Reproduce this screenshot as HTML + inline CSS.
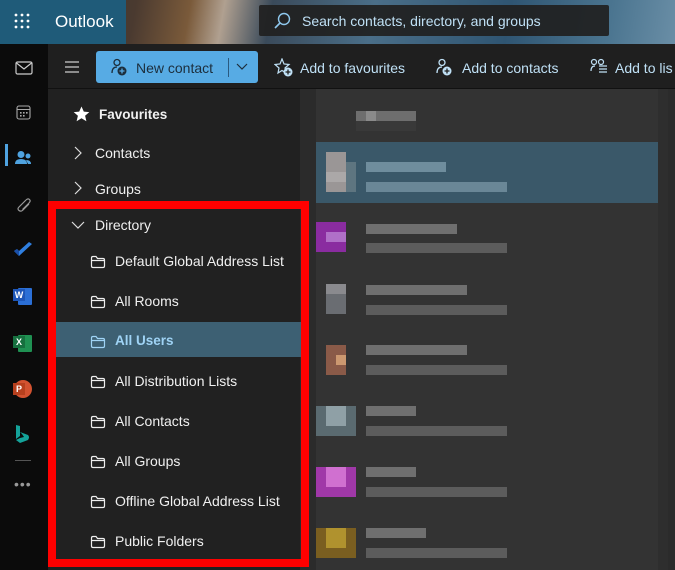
<!DOCTYPE html>
<html><head><style>
*{margin:0;padding:0;box-sizing:border-box}
body{width:675px;height:570px;overflow:hidden;background:#1f1f1f;font-family:"Liberation Sans",sans-serif;position:relative;color:#fff}
.abs{position:absolute}
.hdr{left:0;top:0;width:675px;height:44px;background:linear-gradient(100deg,#2a3036 0%,#4a3a30 20%,#7a5a3a 28%,#b0a090 33%,#3a4a5a 40%,#4a6e88 55%,#2f5572 75%,#4b7590 90%,#6a8ea6 100%)}
.hdrl{left:0;top:0;width:126px;height:44px;background:#1f5b79}
.search{left:259px;top:5px;width:350px;height:31px;background:rgba(32,32,32,.93);border-radius:2px}
.tb{left:48px;top:44px;width:627px;height:45px;background:#1f1f1f;border-bottom:1px solid #111}
.rail{left:0;top:44px;width:48px;height:526px;background:#0b0b0b}
.nav{left:48px;top:89px;width:253px;height:481px;background:#212121}
.list{left:300px;top:89px;width:375px;height:481px;background:#2b2b2b}
.list2{left:316px;top:89px;width:342px;height:481px;background:#333}
.t{font-size:14px;color:#f0f0f0;white-space:nowrap}
</style></head><body>
<div class="abs hdr"></div>
<div class="abs hdrl"></div>
<svg class="abs" style="left:14px;top:13px" width="18" height="18"><g fill="#fff"><circle cx="2" cy="2" r="1.4"/><circle cx="8" cy="2" r="1.4"/><circle cx="14" cy="2" r="1.4"/><circle cx="2" cy="8" r="1.4"/><circle cx="8" cy="8" r="1.4"/><circle cx="14" cy="8" r="1.4"/><circle cx="2" cy="14" r="1.4"/><circle cx="8" cy="14" r="1.4"/><circle cx="14" cy="14" r="1.4"/></g></svg>
<div class="abs" style="left:55px;top:12px;font-size:17px;color:#fff">Outlook</div>
<div class="abs search"></div>
<svg class="abs" style="left:273px;top:12px" width="18" height="18"><circle cx="11" cy="7" r="5.5" fill="none" stroke="#8fc8ee" stroke-width="1.4"/><path d="M7 11 L2 16" stroke="#8fc8ee" stroke-width="1.6"/></svg>
<div class="abs t" style="left:302px;top:13px;color:#bfe0f5;font-size:14px">Search contacts, directory, and groups</div>

<div class="abs rail"></div>
<div class="abs tb"></div>
<div class="abs nav"></div>
<div class="abs list"></div>
<div class="abs list2"></div>
<div class="abs" style="left:658px;top:89px;width:10px;height:481px;background:#2e2e2e"></div>

<svg class="abs" style="left:15px;top:61px" width="18" height="14"><rect x="1" y="1" width="16" height="12" rx="1.5" fill="none" stroke="#ccc" stroke-width="1.2"/><path d="M1.5 2 L9 8 L16.5 2" fill="none" stroke="#ccc" stroke-width="1.2"/></svg>
<svg class="abs" style="left:16px;top:105px" width="16" height="16"><rect x="1" y="1" width="13" height="13" rx="2" fill="none" stroke="#aaa" stroke-width="1.1"/><path d="M1 4.5H14" stroke="#aaa"/><g fill="#aaa"><rect x="4" y="7" width="1.6" height="1.6"/><rect x="7" y="7" width="1.6" height="1.6"/><rect x="10" y="7" width="1.6" height="1.6"/><rect x="4" y="10" width="1.6" height="1.6"/><rect x="7" y="10" width="1.6" height="1.6"/></g></svg>
<div class="abs" style="left:5px;top:144px;width:3px;height:22px;background:#4fa3e0"></div>
<svg class="abs" style="left:14px;top:150px" width="18" height="16"><circle cx="7" cy="4.5" r="3.5" fill="#4fa3e0"/><circle cx="14" cy="6" r="2.5" fill="#4fa3e0"/><path d="M1 14 Q1 9 7 9 Q13 9 13 14 Z" fill="#4fa3e0"/><path d="M12 10 Q17 10 17 14 L14 14Z" fill="#4fa3e0"/></svg>
<svg class="abs" style="left:15px;top:197px" width="16" height="16"><path d="M11 3 L4 10 Q2 12 4 13.5 Q6 15 8 13 L14 7" fill="none" stroke="#999" stroke-width="1.2"/><path d="M11 3 Q13 1 14.5 2.5 Q16 4 14 6 L7.5 12.5" fill="none" stroke="#999" stroke-width="1.2"/></svg>
<svg class="abs" style="left:13px;top:242px" width="20" height="16"><path d="M1 9 L6 14 L19 2 L16 0 L6 9 L4 7Z" fill="#2f7fe0"/><path d="M1 9 L4 7 L6 9 L6 14Z" fill="#1a4fa8"/></svg>
<div class="abs" style="left:18px;top:288px;width:14px;height:17px;background:#2b6fd6;border-radius:1px"></div>
<div class="abs" style="left:13px;top:289px;width:12px;height:12px;background:#1d56b8;font-size:9px;font-weight:bold;text-align:center;line-height:12px">W</div>
<div class="abs" style="left:18px;top:335px;width:14px;height:17px;background:#1f9152;border-radius:1px"></div>
<div class="abs" style="left:13px;top:336px;width:12px;height:12px;background:#16703f;font-size:9px;font-weight:bold;text-align:center;line-height:12px">X</div>
<div class="abs" style="left:14px;top:380px;width:18px;height:18px;background:#d35230;border-radius:50%"></div>
<div class="abs" style="left:13px;top:383px;width:12px;height:12px;background:#b7401e;font-size:9px;font-weight:bold;text-align:center;line-height:12px">P</div>
<svg class="abs" style="left:15px;top:424px" width="16" height="20"><path d="M1 1 L5 2 L5 12 L1 15Z" fill="#14a39a"/><path d="M5 8 L13 11 Q15 13 13 16 L5 19 L1 16 L5 14 L9 13 L7 10Z" fill="#14a39a"/></svg>
<div class="abs" style="left:15px;top:460px;width:16px;height:1px;background:#555"></div>
<div class="abs" style="left:14px;top:476px;font-size:14px;color:#999;letter-spacing:1px">•••</div>

<svg class="abs" style="left:64px;top:61px" width="16" height="12"><path d="M1 1H15M1 6H15M1 11H15" stroke="#ccc" stroke-width="1.2"/></svg>
<div class="abs" style="left:96px;top:51px;width:162px;height:32px;background:#57abe4;border-radius:3px"></div>
<div class="abs" style="left:228px;top:58px;width:1px;height:19px;background:#2a5a80"></div>
<svg class="abs" style="left:110px;top:58px" width="18" height="18"><circle cx="7" cy="4.5" r="3" fill="none" stroke="#1c2e3c" stroke-width="1.3"/><path d="M2 15 Q2 9 7 9" fill="none" stroke="#1c2e3c" stroke-width="1.3"/><circle cx="12" cy="13" r="4.5" fill="#1c2e3c"/><path d="M12 10.5V15.5M9.5 13H14.5" stroke="#57abe4" stroke-width="1.3"/></svg>
<div class="abs t" style="left:136px;top:60px;color:#1c2e3c;font-size:14px">New contact</div>
<svg class="abs" style="left:236px;top:63px" width="12" height="8"><path d="M1 1 L6 6 L11 1" fill="none" stroke="#1c2e3c" stroke-width="1.2"/></svg>
<svg class="abs" style="left:274px;top:58px" width="20" height="20"><path d="M8 1 L10 6 L15 6.5 L11 10 L12 15 L8 12.5 L4 15 L5 10 L1 6.5 L6 6Z" fill="none" stroke="#bfe0f5" stroke-width="1.2"/><circle cx="14" cy="14" r="4.5" fill="#bfe0f5"/><path d="M14 11.5V16.5M11.5 14H16.5" stroke="#1f1f1f" stroke-width="1.3"/></svg>
<div class="abs t" style="left:300px;top:60px;color:#bfe0f5">Add to favourites</div>
<svg class="abs" style="left:435px;top:58px" width="20" height="20"><circle cx="7" cy="4.5" r="3" fill="none" stroke="#bfe0f5" stroke-width="1.3"/><path d="M2 15 Q2 9 7 9" fill="none" stroke="#bfe0f5" stroke-width="1.3"/><circle cx="12" cy="13" r="4.5" fill="#bfe0f5"/><path d="M12 10.5V15.5M9.5 13H14.5" stroke="#1f1f1f" stroke-width="1.3"/></svg>
<div class="abs t" style="left:462px;top:60px;color:#bfe0f5">Add to contacts</div>
<svg class="abs" style="left:590px;top:58px" width="20" height="18"><circle cx="4" cy="4" r="2.5" fill="none" stroke="#bfe0f5" stroke-width="1.2"/><circle cx="11" cy="4" r="2.5" fill="none" stroke="#bfe0f5" stroke-width="1.2"/><path d="M1 13 Q1 8 5 8M9 11H17M9 14H17M9 8H17" fill="none" stroke="#bfe0f5" stroke-width="1.2"/></svg>
<div class="abs t" style="left:615px;top:60px;color:#bfe0f5">Add to lis</div>

<svg class="abs" style="left:73px;top:106px" width="17" height="16"><path d="M8.5 0.5 L10.8 5.6 L16.3 6.1 L12.1 9.8 L13.4 15.2 L8.5 12.3 L3.6 15.2 L4.9 9.8 L0.7 6.1 L6.2 5.6Z" fill="#fff"/></svg>
<div class="abs t" style="left:99px;top:107px;font-weight:bold;font-size:13.5px">Favourites</div>
<svg class="abs" style="left:74px;top:146px" width="8" height="14"><path d="M1 1 L7 7 L1 13" fill="none" stroke="#ddd" stroke-width="1.2"/></svg>
<div class="abs t" style="left:95px;top:145px">Contacts</div>
<svg class="abs" style="left:74px;top:181px" width="8" height="14"><path d="M1 1 L7 7 L1 13" fill="none" stroke="#ddd" stroke-width="1.2"/></svg>
<div class="abs t" style="left:95px;top:181px">Groups</div>

<div class="abs" style="left:56px;top:322px;width:245px;height:35px;background:#3d6073"></div>
<div class="abs" style="left:48px;top:201px;width:261px;height:366px;border:8px solid #ff0000"></div>

<svg class="abs" style="left:71px;top:221px" width="14" height="8"><path d="M1 1 L7 7 L13 1" fill="none" stroke="#ddd" stroke-width="1.2"/></svg>
<div class="abs t" style="left:95px;top:217px">Directory</div>

<svg width="0" height="0" style="position:absolute"><defs><symbol id="f" viewBox="0 0 16 14"><path d="M1.5 3 Q1.5 1.5 3 1.5 H6 L7.5 3.5 H13 Q14.5 3.5 14.5 5 V11 Q14.5 12.5 13 12.5 H3 Q1.5 12.5 1.5 11Z M1.5 5.5 H14.5" fill="none" stroke="currentColor" stroke-width="1.2"/></symbol></defs></svg>
<svg class="abs" style="left:90px;top:255px;color:#eee" width="16" height="14"><use href="#f"/></svg>
<div class="abs t" style="left:115px;top:253px">Default Global Address List</div>
<svg class="abs" style="left:90px;top:295px;color:#eee" width="16" height="14"><use href="#f"/></svg>
<div class="abs t" style="left:115px;top:293px">All Rooms</div>
<svg class="abs" style="left:90px;top:335px;color:#9fd3f5" width="16" height="14"><use href="#f"/></svg>
<div class="abs t" style="left:115px;top:333px;color:#9fd3f5;font-weight:bold;font-size:13.5px">All Users</div>
<svg class="abs" style="left:90px;top:375px;color:#eee" width="16" height="14"><use href="#f"/></svg>
<div class="abs t" style="left:115px;top:373px">All Distribution Lists</div>
<svg class="abs" style="left:90px;top:415px;color:#eee" width="16" height="14"><use href="#f"/></svg>
<div class="abs t" style="left:115px;top:413px">All Contacts</div>
<svg class="abs" style="left:90px;top:455px;color:#eee" width="16" height="14"><use href="#f"/></svg>
<div class="abs t" style="left:115px;top:453px">All Groups</div>
<svg class="abs" style="left:90px;top:495px;color:#eee" width="16" height="14"><use href="#f"/></svg>
<div class="abs t" style="left:115px;top:493px">Offline Global Address List</div>
<svg class="abs" style="left:90px;top:535px;color:#eee" width="16" height="14"><use href="#f"/></svg>
<div class="abs t" style="left:115px;top:533px">Public Folders</div>

<div class="abs" style="left:356px;top:111px;width:60px;height:10px;background:#6e6e6e"></div>
<div class="abs" style="left:366px;top:111px;width:10px;height:10px;background:#8a8a8a"></div>
<div class="abs" style="left:356px;top:121px;width:60px;height:10px;background:#393939"></div>

<div class="abs" style="left:316px;top:142px;width:342px;height:61px;background:#3a5869"></div>
<div class="abs" style="left:326px;top:152px;width:20px;height:40px;background:#9a9696"></div>
<div class="abs" style="left:326px;top:172px;width:20px;height:10px;background:#aba8a8"></div>
<div class="abs" style="left:346px;top:162px;width:10px;height:30px;background:#5e7580"></div>
<div class="abs" style="left:366px;top:162px;width:80px;height:10px;background:#6f8d9d"></div>
<div class="abs" style="left:366px;top:182px;width:141px;height:10px;background:#6a8797"></div>

<div class="abs" style="left:316px;top:222px;width:30px;height:30px;background:#8a2ca0"></div><div class="abs" style="left:326px;top:232px;width:20px;height:10px;background:#b070c8"></div>
<div class="abs" style="left:366px;top:224px;width:91px;height:10px;background:#6f6f6f"></div><div class="abs" style="left:366px;top:243px;width:141px;height:10px;background:#5c5c5c"></div>

<div class="abs" style="left:326px;top:284px;width:20px;height:30px;background:#6a6d72"></div><div class="abs" style="left:326px;top:284px;width:20px;height:10px;background:#8a8a8e"></div>
<div class="abs" style="left:366px;top:285px;width:101px;height:10px;background:#6f6f6f"></div><div class="abs" style="left:366px;top:305px;width:141px;height:10px;background:#5c5c5c"></div>

<div class="abs" style="left:326px;top:345px;width:20px;height:30px;background:#8a5a48"></div><div class="abs" style="left:336px;top:355px;width:10px;height:10px;background:#cc9870"></div>
<div class="abs" style="left:366px;top:345px;width:101px;height:10px;background:#6f6f6f"></div><div class="abs" style="left:366px;top:365px;width:141px;height:10px;background:#5c5c5c"></div>

<div class="abs" style="left:316px;top:406px;width:40px;height:30px;background:#5a6a70"></div><div class="abs" style="left:326px;top:406px;width:20px;height:20px;background:#8fa0a6"></div>
<div class="abs" style="left:366px;top:406px;width:50px;height:10px;background:#6f6f6f"></div><div class="abs" style="left:366px;top:426px;width:141px;height:10px;background:#5c5c5c"></div>

<div class="abs" style="left:316px;top:467px;width:40px;height:30px;background:#a038a8"></div><div class="abs" style="left:326px;top:467px;width:20px;height:20px;background:#d070d0"></div>
<div class="abs" style="left:366px;top:467px;width:50px;height:10px;background:#6f6f6f"></div><div class="abs" style="left:366px;top:487px;width:141px;height:10px;background:#5c5c5c"></div>

<div class="abs" style="left:316px;top:528px;width:40px;height:30px;background:#7a5e20"></div><div class="abs" style="left:326px;top:528px;width:20px;height:20px;background:#b0922e"></div>
<div class="abs" style="left:366px;top:528px;width:60px;height:10px;background:#6f6f6f"></div><div class="abs" style="left:366px;top:548px;width:141px;height:10px;background:#5c5c5c"></div>
</body></html>
